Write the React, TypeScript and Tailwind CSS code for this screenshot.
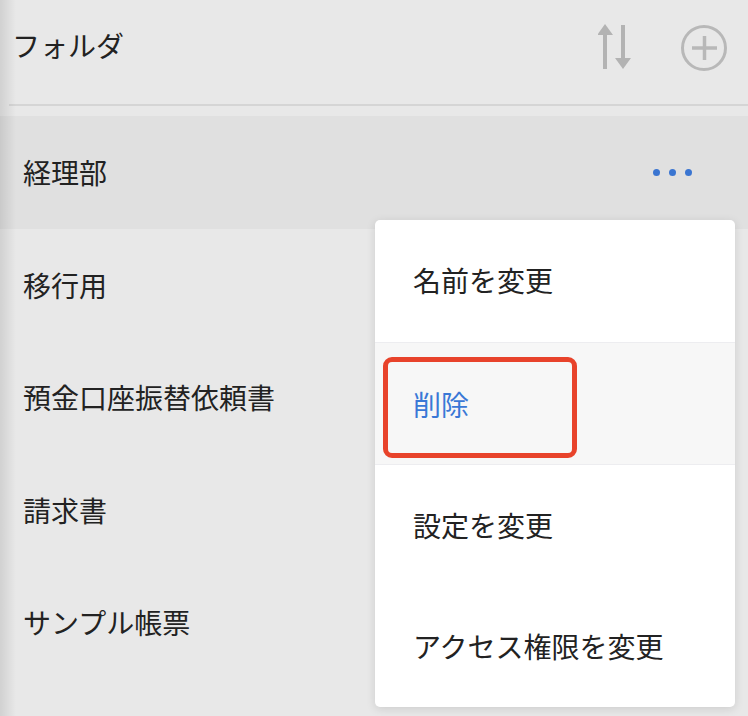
import React from "react";

const folders = ["経理部", "移行用", "預金口座振替依頼書", "請求書", "サンプル帳票"];

const SortIcon = () => (
  <svg width="36" height="50" viewBox="0 0 36 50" fill="#b3b3b3">
    {/* up arrow */}
    <polygon points="7,1 15,12 -1,12" />
    <rect x="5" y="11" width="4" height="35" />
    {/* down arrow */}
    <rect x="23" y="2" width="4" height="35" />
    <polygon points="17,35 33,35 25,46" />
  </svg>
);

const PlusCircle = () => (
  <svg width="48" height="48" viewBox="0 0 48 48" fill="none" stroke="#b8b8b8">
    <circle cx="24" cy="24" r="21.5" strokeWidth="3" />
    <path d="M12 24h25M24.5 12v24" strokeWidth="3.5" />
  </svg>
);

const Dots = () => (
  <div className="flex items-center gap-[9px]">
    <span className="block w-[7px] h-[7px] rounded-full bg-[#3a75d1]" />
    <span className="block w-[7px] h-[7px] rounded-full bg-[#3a75d1]" />
    <span className="block w-[7px] h-[7px] rounded-full bg-[#3a75d1]" />
  </div>
);

export default function App() {
  return (
    <div
      className="relative w-[748px] h-[716px] overflow-hidden bg-[#e8e8e8] text-[#222]"
      style={{ fontFamily: '"Noto Sans CJK JP", "Noto Sans", sans-serif' }}
    >
      {/* header */}
      <div className="flex items-center justify-between h-[90px] pl-[12px] pr-[20px]">
        <span className="text-[28px]">フォルダ</span>
        <div className="flex items-center gap-[46px] pt-[5px]">
          <SortIcon />
          <PlusCircle />
        </div>
      </div>
      <div className="mt-[14px] ml-[9px] h-[2px] bg-[#d5d5d5]" />

      {/* folder list */}
      <div className="mt-[10px]">
        {folders.map((name, i) => (
          <div
            key={name}
            className={`flex items-center justify-between h-[112.5px] pl-[23px] pr-[56px] ${
              i === 0 ? "bg-[#e0e0e0]" : ""
            }`}
          >
            <span className="text-[28px]">{name}</span>
            {i === 0 && <Dots />}
          </div>
        ))}
      </div>

      {/* left edge shade */}
      <div className="pointer-events-none absolute left-0 top-0 h-full w-[16px] bg-gradient-to-r from-black/10 to-transparent" />

      {/* context menu */}
      <div className="absolute left-[375px] top-[220px] w-[360px] h-[487px] bg-white rounded-[5px] shadow-[0_2px_10px_rgba(0,0,0,0.12)] flex flex-col overflow-hidden text-[28px]">
        <div className="h-[122px] flex items-center pl-[38px] pb-[2px]">名前を変更</div>
        <div className="relative h-[123px] flex items-center pl-[38px] text-[#3a78d6] bg-[#f7f7f7] border-y border-[#ededf0]">
          削除
          <div className="absolute left-[8px] top-[14px] w-[194px] h-[101px] border-[5px] border-[#e8432b] rounded-[9px]" />
        </div>
        <div className="h-[120px] flex items-center pl-[38px]">設定を変更</div>
        <div className="flex-1 flex items-center pl-[38px]">アクセス権限を変更</div>
      </div>
    </div>
  );
}
